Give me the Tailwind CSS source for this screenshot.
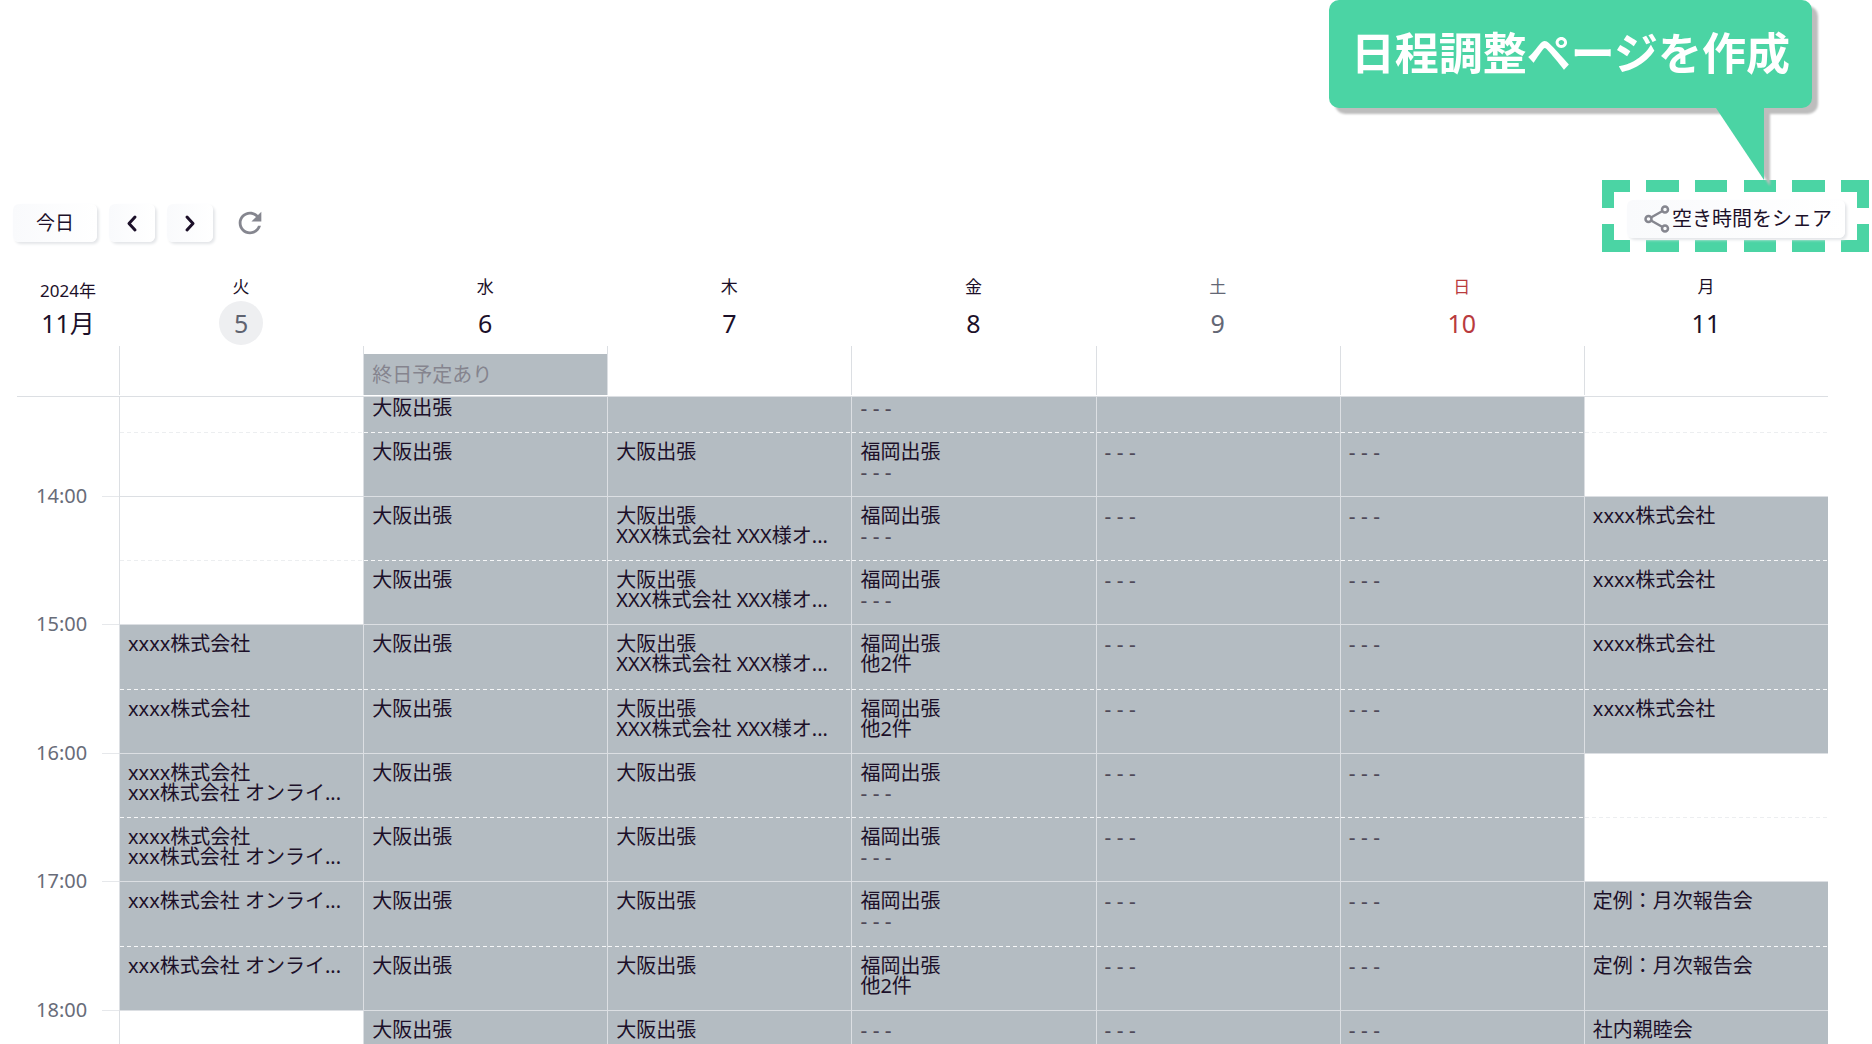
<!DOCTYPE html>
<html lang="ja">
<head>
<meta charset="utf-8">
<title>カレンダー</title>
<script src="https://cdn.jsdelivr.net/npm/@tailwindcss/browser@4"></script>
</head>
<body class="bg-white font-['Noto_Sans','Noto_Sans_CJK_JP',sans-serif] text-[#1c1029]">
<div class="h-screen overflow-hidden">

  <div class="flex flex-col items-end pr-[60px] drop-shadow-[6px_6px_1px_#bdbdbd] relative z-10">
    <p class="flex h-[108px] items-center rounded-[10px] bg-[#4bd4a4] px-[22px] pb-[2px] text-[44px] leading-none font-bold text-white whitespace-nowrap">日程調整ページを作成</p>
    <svg class="mr-12 h-[72px] w-12 text-[#4bd4a4]" viewBox="0 0 48 72" aria-hidden="true"><path d="M0 0H48V72Z" fill="currentColor"/></svg>
  </div>

  <header class="flex items-start justify-between pr-[2px] pl-[13px]">
    <div class="flex items-center gap-3 pt-6">
      <button class="h-[38px] w-[84px] rounded-md bg-linear-to-r from-[#f9fafc] to-white text-[19px] shadow-[2px_2px_3px_#e3e5e8]">今日</button>
      <button aria-label="前の週" class="flex h-[38px] w-[46px] items-center justify-center rounded-md bg-linear-to-r from-[#f9fafc] to-white shadow-[2px_2px_3px_#e3e5e8]">
        <svg class="size-5" viewBox="0 0 20 20" fill="none" stroke="currentColor" stroke-width="3" stroke-linecap="round" stroke-linejoin="round"><path d="M13 4L7 10.500L13 17"/></svg>
      </button>
      <button aria-label="次の週" class="flex h-[38px] w-[46px] items-center justify-center rounded-md bg-linear-to-r from-[#f9fafc] to-white shadow-[2px_2px_3px_#e3e5e8]">
        <svg class="size-5" viewBox="0 0 20 20" fill="none" stroke="currentColor" stroke-width="3" stroke-linecap="round" stroke-linejoin="round"><path d="M7 4L13 10.500L7 17"/></svg>
      </button>
      <button aria-label="更新" class="ml-2 text-[#85868f]">
        <svg class="size-[34px]" viewBox="0 0 24 24" fill="currentColor"><path d="M17.650 6.350C16.200 4.900 14.210 4 12 4c-4.420 0-7.990 3.580-7.990 8s3.570 8 7.990 8c3.730 0 6.840-2.550 7.730-6h-2.080c-.820 2.330-3.040 4-5.650 4-3.310 0-6-2.690-6-6s2.690-6 6-6c1.660 0 3.140.690 4.220 1.780L13 11h7V4l-2.350 2.350z"/></svg>
      </button>
    </div>
    <div class="grid h-[72px] w-[268px]">
      <svg class="col-start-1 row-start-1 h-[72px] w-[268px] text-[#4bd4a4]" viewBox="0 0 268 72" fill="currentColor" aria-hidden="true">
        <path d="M0 0H28V12H12V28H0ZM44 0H77V12H44ZM93 0H125V12H93ZM142 0H174V12H142ZM190 0H223V12H190ZM239 0H267V28H255V12H239Z"/>
        <path d="M0 72H28V60H12V44H0ZM44 72H77V60H44ZM93 72H125V60H93ZM142 72H174V60H142ZM190 72H223V60H190ZM239 72H267V44H255V60H239Z"/>
      </svg>
      <button class="col-start-1 row-start-1 mx-[25px] mt-5 flex h-[38px] items-center justify-center gap-[2px] rounded-md bg-linear-to-r from-[#f9fafc] to-white pl-1 text-xl whitespace-nowrap shadow-[2px_2px_3px_#e3e5e8]">
        <svg class="h-7 w-[26px] shrink-0 text-[#85868f]" viewBox="0 0 26 28" fill="none" stroke="currentColor" stroke-width="2.500"><circle cx="4.500" cy="14" r="3"/><circle cx="21" cy="4.500" r="3"/><circle cx="21" cy="23.500" r="3"/><path d="M7 12.500L18.500 6M7 15.500L18.500 22"/></svg>
        空き時間をシェア
      </button>
    </div>
  </header>

  <main class="pr-[44px] pl-[17px]">
    <table class="w-full table-fixed border-separate border-spacing-0 text-xl leading-5">
      <colgroup><col class="w-[102px]"><col><col><col><col><col><col><col></colgroup>
      <thead id="head"></thead>
      <tbody id="slots"></tbody>
    </table>
  </main>
</div>

<script>
  const days = [
    ['火', '5', '', 'rounded-full bg-[#eeeff1] text-[#5f6370]'],
    ['水', '6', '', ''],
    ['木', '7', '', ''],
    ['金', '8', '', ''],
    ['土', '9', 'text-[#636775]', ''],
    ['日', '10', 'text-[#b93b3e]', ''],
    ['月', '11', '', '']
  ];
  const O = '大阪出張', F = '福岡出張', D = '- - -';
  const X = 'xxxx株式会社', X3 = 'xxx株式会社 オンライ...', XM = 'XXX株式会社 XXX様オ...', T = '定例：月次報告会';
  // null is a free slot, an array lists the appointments of a busy one
  const rows = [
    ['', 'h-[35px]', [null, [O], [], [D], [], [], null]],
    ['', 'h-[64px]', [null, [O], [O], [F, D], [D], [D], null]],
    ['14:00', 'h-[64px]', [null, [O], [O, XM], [F, D], [D], [D], [X]]],
    ['', 'h-[64px]', [null, [O], [O, XM], [F, D], [D], [D], [X]]],
    ['15:00', 'h-[65px]', [[X], [O], [O, XM], [F, '他2件'], [D], [D], [X]]],
    ['', 'h-[64px]', [[X], [O], [O, XM], [F, '他2件'], [D], [D], [X]]],
    ['16:00', 'h-[64px]', [[X, X3], [O], [O], [F, D], [D], [D], null]],
    ['', 'h-[64px]', [[X, X3], [O], [O], [F, D], [D], [D], null]],
    ['17:00', 'h-[65px]', [[X3], [O], [O], [F, D], [D], [D], [T]]],
    ['', 'h-[64px]', [[X3], [O], [O], [F, '他2件'], [D], [D], [T]]],
    ['18:00', 'h-[64px]', [null, [O], [O], [D], [D], [D], ['社内親睦会']]]
  ];

  document.getElementById('head').innerHTML =
    '<tr><th class="p-0 pt-[29px] align-top font-normal"><div class="text-[17px]">2024年</div><div class="flex h-11 items-center justify-center text-[25px]">11月</div></th>' +
    days.map(([w, n, tone, mark]) =>
      `<th scope="col" class="p-0 pt-[25px] pb-px align-top font-normal ${tone}"><div class="text-[17px]">${w}</div><div class="mx-auto mt-1 flex size-11 items-center justify-center text-[25px] ${mark}">${n}</div></th>`).join('') +
    '</tr><tr><td class="h-[51px] border-b border-[#dcdfe3] p-0"></td>' +
    days.map((d, i) =>
      `<td class="h-[51px] border-b border-[#dcdfe3] p-0 align-top"><div class="h-[49px] border-l border-[#dcdfe3] pt-2">${i === 1 ? '<div class="flex h-[41px] items-center bg-[#b4bcc2] pl-2 text-[#85848e]">終日予定あり</div>' : ''}</div></td>`).join('') + '</tr>';

  document.getElementById('slots').innerHTML = rows.map(([time, height, cells], r) => {
    const label = time
      ? `<div class="-mt-[10px] flex h-5 items-center justify-between pl-[19px] text-[#686c79]"><span>${time}</span><span class="h-px w-[17px] bg-[#e6e8eb]"></span></div>` : '';
    return `<tr><th scope="row" class="${height} p-0 align-top font-normal">${label}</th>` + cells.map(c => {
      const busy = c ? 'bg-[#b4bcc2]' : '';
      let rule = '';
      if (time) rule = 'border-t border-t-[#dcdfe3] pt-[9px]';
      else if (r === 0) rule = 'pt-px';
      else if (c) rule = 'pt-[10px] bg-[repeating-linear-gradient(90deg,#f6f7f8_0_4px,transparent_4px_7px)] bg-[length:100%_1px] bg-no-repeat';
      else rule = 'pt-[10px] bg-[repeating-linear-gradient(90deg,#eceef0_0_4px,transparent_4px_7px)] bg-[length:100%_1px] bg-no-repeat';
      return `<td class="${height} overflow-hidden border-l border-l-[#dcdfe3] p-0 pl-2 align-top whitespace-nowrap ${busy} ${rule}">` +
        (c || []).map(t => `<div class="${t === D ? 'text-[21px] text-[#4f4a59]' : ''}">${t}</div>`).join('') + '</td>';
    }).join('') + '</tr>';
  }).join('');
</script>
</body>
</html>
